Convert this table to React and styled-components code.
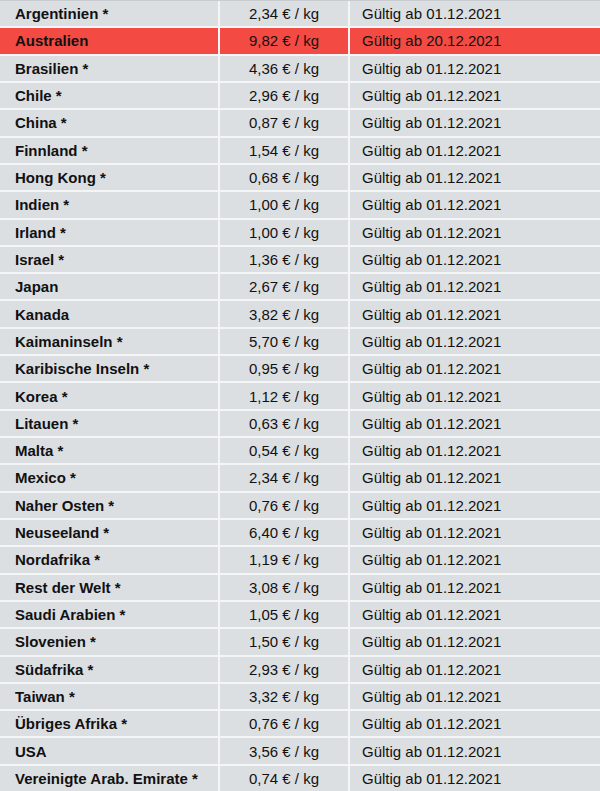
import React from 'react';
import styled, { createGlobalStyle } from 'styled-components';

const GlobalStyle = createGlobalStyle`
  html, body {
    margin: 0;
    padding: 0;
    background: #f4f5f6;
  }
  body {
    font-family: "Liberation Sans", Arial, sans-serif;
  }
`;

const Table = styled.div`
  width: 600px;
  height: 791px;
  display: flex;
  flex-direction: column;
  gap: 2px;
  background: #f4f5f6;
  border-top: 1px solid #c9ccd0;
  box-sizing: border-box;
`;

const Row = styled.div`
  flex: 1;
  display: grid;
  grid-template-columns: 218px 128px 1fr;
  gap: 2px;
`;

const Cell = styled.div`
  display: flex;
  align-items: center;
  justify-content: ${props => props.align === 'center' ? 'center' : 'flex-start'};
  padding-left: ${props => props.pad || 0}px;
  background: ${props => props.highlight ? '#f34a43' : '#dcdfe2'};
  color: #111;
  font-size: 15px;
  font-weight: ${props => props.bold ? 'bold' : 'normal'};
  white-space: nowrap;
`;

const rates = [
  ['Argentinien *', '2,34', '01.12.2021'],
  ['Australien', '9,82', '20.12.2021', true],
  ['Brasilien *', '4,36', '01.12.2021'],
  ['Chile *', '2,96', '01.12.2021'],
  ['China *', '0,87', '01.12.2021'],
  ['Finnland *', '1,54', '01.12.2021'],
  ['Hong Kong *', '0,68', '01.12.2021'],
  ['Indien *', '1,00', '01.12.2021'],
  ['Irland *', '1,00', '01.12.2021'],
  ['Israel *', '1,36', '01.12.2021'],
  ['Japan', '2,67', '01.12.2021'],
  ['Kanada', '3,82', '01.12.2021'],
  ['Kaimaninseln *', '5,70', '01.12.2021'],
  ['Karibische Inseln *', '0,95', '01.12.2021'],
  ['Korea *', '1,12', '01.12.2021'],
  ['Litauen *', '0,63', '01.12.2021'],
  ['Malta *', '0,54', '01.12.2021'],
  ['Mexico *', '2,34', '01.12.2021'],
  ['Naher Osten *', '0,76', '01.12.2021'],
  ['Neuseeland *', '6,40', '01.12.2021'],
  ['Nordafrika *', '1,19', '01.12.2021'],
  ['Rest der Welt *', '3,08', '01.12.2021'],
  ['Saudi Arabien *', '1,05', '01.12.2021'],
  ['Slovenien *', '1,50', '01.12.2021'],
  ['Südafrika *', '2,93', '01.12.2021'],
  ['Taiwan *', '3,32', '01.12.2021'],
  ['Übriges Afrika *', '0,76', '01.12.2021'],
  ['USA', '3,56', '01.12.2021'],
  ['Vereinigte Arab. Emirate *', '0,74', '01.12.2021'],
];

const App = () => {
  return (
    <>
      <GlobalStyle />
      <Table>
        {rates.map(([country, price, date, highlight]) => (
          <Row key={country}>
            <Cell bold pad={15} highlight={highlight}>{country}</Cell>
            <Cell align="center" highlight={highlight}>{price} € / kg</Cell>
            <Cell pad={12} highlight={highlight}>Gültig ab {date}</Cell>
          </Row>
        ))}
      </Table>
    </>
  );
};

export default App;
